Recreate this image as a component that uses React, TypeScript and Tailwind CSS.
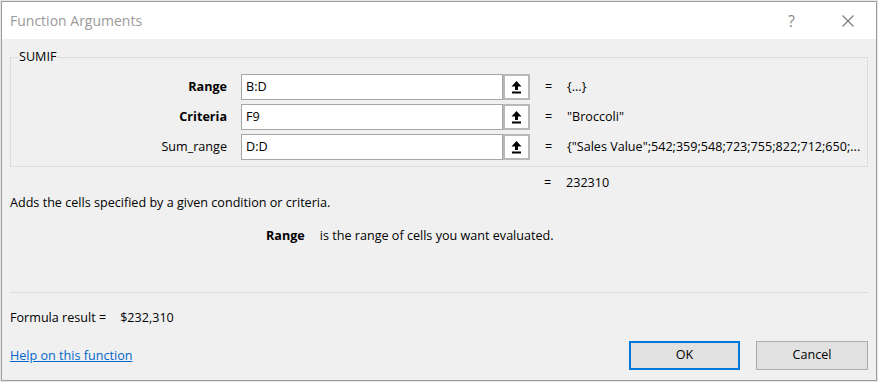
const rows = [
  { label: "Range", bold: true, value: "B:D", result: "{...}" },
  { label: "Criteria", bold: true, value: "F9", result: "\"Broccoli\"" },
  {
    label: "Sum_range",
    bold: false,
    value: "D:D",
    result: "{\"Sales Value\";542;359;548;723;755;822;712;650;...",
  },
];

function UploadIcon() {
  return (
    <svg width="11" height="13" viewBox="0 0 11 13" fill="#000">
      <polygon points="5.5,0 10.5,5.5 7,5.5 7,9 4,9 4,5.5 0.5,5.5" />
      <rect x="1" y="10.5" width="9" height="2" />
    </svg>
  );
}

export default function App() {
  return (
    <div className="w-[878px] h-[382px] bg-[#e6e6e6] pl-[1px] pt-[1px] font-['Open_Sans',sans-serif] text-[12.6px] text-black overflow-hidden">
      <div className="w-[876px] h-[380px] border border-[#9c9c9c] bg-[#f0f0f0] flex flex-col">
        {/* title bar */}
        <div className="h-[37px] bg-white flex items-center justify-between pl-[8px] pr-[22px] shrink-0">
          <span className="text-[14px] text-[#9a9a9a] leading-[20px]">
            Function Arguments
          </span>
          <div className="flex items-center gap-[47px] text-[#8a8a8a]">
            <span className="text-[16px] leading-[20px]">?</span>
            <svg width="12" height="12" viewBox="0 0 12 12" stroke="#7a7a7a" strokeWidth="1.1">
              <line x1="0.5" y1="0.5" x2="11.5" y2="11.5" />
              <line x1="11.5" y1="0.5" x2="0.5" y2="11.5" />
            </svg>
          </div>
        </div>

        <div className="px-[8px] flex flex-col">
          {/* group box */}
          <div className="relative mt-[18px] border border-[#dcdcdc] pt-[16px] pb-[6px] pr-[6px]">
            <span className="absolute -top-[9px] left-[7px] px-[1px] bg-[#f0f0f0] leading-[16px]">
              SUMIF
            </span>
            <div className="flex flex-col gap-[4px]">
              {rows.map((r) => (
                <div key={r.label} className="flex items-center h-[26px]">
                  <span
                    className={`w-[216px] text-right leading-[16px] ${
                      r.bold ? "font-bold" : ""
                    }`}
                  >
                    {r.label}
                  </span>
                  <div className="ml-[14px] flex h-[26px]">
                    <div className="w-[262px] h-full bg-white border border-[#a6a6a6] flex items-center pl-[4px]">
                      {r.value}
                    </div>
                    <div className="w-[27px] h-full border-2 border-[#b8b8b8] bg-white flex items-center justify-center">
                      <UploadIcon />
                    </div>
                  </div>
                  <span className="ml-[15px] w-[6px]">=</span>
                  <span className="ml-[16px] whitespace-nowrap">{r.result}</span>
                </div>
              ))}
            </div>
          </div>

          <div className="mt-[8px] flex leading-[16px]">
            <span className="ml-[534px] w-[6px]">=</span>
            <span className="ml-[16px]">232310</span>
          </div>

          <p className="mt-[4px] leading-[16px]">
            Adds the cells specified by a given condition or criteria.
          </p>

          <div className="mt-[17px] flex leading-[16px] ml-[256px]">
            <span className="font-bold">Range</span>
            <span className="ml-[15px]">is the range of cells you want evaluated.</span>
          </div>

          <div className="mt-[48px] h-px bg-[#dcdcdc]" />

          <div className="mt-[17px] flex leading-[16px]">
            <span>Formula result =</span>
            <span className="ml-[14px]">$232,310</span>
          </div>

          <div className="mt-[15px] flex items-center">
            <a href="#" className="text-[#0066cc] underline leading-[16px]">
              Help on this function
            </a>
            <div className="ml-auto flex gap-[16px]">
              <button className="w-[111px] h-[29px] border-2 border-[#0078d7] bg-[#e1e1e1]">
                OK
              </button>
              <button className="w-[112px] h-[29px] border border-[#adadad] bg-[#e1e1e1]">
                Cancel
              </button>
            </div>
          </div>
        </div>
      </div>
    </div>
  );
}
